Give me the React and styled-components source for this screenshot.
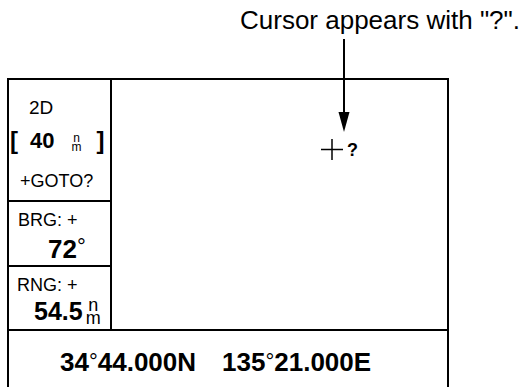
import React from "react";
import styled, { createGlobalStyle } from "styled-components";

const GlobalStyle = createGlobalStyle`
  html, body {
    margin: 0;
    padding: 0;
    background: #ffffff;
  }
  body {
    font-family: "Liberation Sans", Arial, sans-serif;
    color: #000;
  }
`;

const Page = styled.div`
  position: relative;
  width: 525px;
  height: 387px;
  overflow: hidden;
`;

const Caption = styled.div`
  height: 78px;
  padding-left: 240px;
  padding-top: 6px;
  box-sizing: border-box;
  font-size: 26px;
  line-height: 28px;
  white-space: nowrap;
`;

const Pointer = styled.svg`
  position: absolute;
  left: 337px;
  top: 39px;
`;

const Screen = styled.div`
  margin-left: 7px;
  width: 442px;
  height: 330px;
  box-sizing: border-box;
  border: 2px solid #000;
  border-bottom: none;
  display: flex;
  flex-direction: column;
`;

const Upper = styled.div`
  display: grid;
  grid-template-columns: 103px 1fr;
  height: 249px;
  border-bottom: 2px solid #000;
`;

const Side = styled.div`
  border-right: 2px solid #000;
  display: flex;
  flex-direction: column;
`;

const Cell = styled.div`
  height: ${(p) => p.$h}px;
  box-sizing: border-box;
  border-bottom: ${(p) => (p.$last ? "none" : "2px solid #000")};
  display: flex;
  flex-direction: column;
`;

const Label = styled.div`
  font-size: ${(p) => p.$size || 18}px;
  line-height: 18px;
  padding-left: ${(p) => p.$x}px;
  margin-top: ${(p) => p.$y}px;
  white-space: nowrap;
`;

const Big = styled.div`
  font-weight: bold;
  font-size: ${(p) => p.$size}px;
  line-height: ${(p) => p.$size}px;
  padding-left: ${(p) => p.$x}px;
  margin-top: ${(p) => p.$y}px;
  display: flex;
  align-items: flex-end;
  white-space: nowrap;
`;

const Bracket = styled.span`
  font-size: 24px;
  margin-right: ${(p) => p.$after || 0}px;
`;

const Degree = styled.span`
  font-weight: normal;
  align-self: flex-start;
  font-size: ${(p) => p.$size || 22}px;
  line-height: 1;
`;

const Unit = styled.span`
  display: inline-flex;
  flex-direction: column;
  align-items: center;
  font-weight: normal;
  font-size: ${(p) => p.$size}px;
  line-height: ${(p) => p.$lh}px;
  margin: 0 ${(p) => p.$right}px ${(p) => p.$bottom || 0}px ${(p) => p.$left}px;
`;

const Map = styled.div`
  position: relative;
`;

const Cursor = styled.div`
  position: absolute;
  left: 209px;
  top: 59px;
  display: flex;
  align-items: center;
  gap: 4px;
`;

const Ask = styled.span`
  font-weight: bold;
  font-size: 18px;
  line-height: 20px;
`;

const Coords = styled.div`
  padding: 18px 0 0 51px;
  font-weight: bold;
  font-size: 26px;
  line-height: 26px;
  display: flex;
  gap: 26px;
  white-space: nowrap;
`;

const Coord = styled.span`
  display: flex;
`;

const Ring = styled.span`
  font-weight: normal;
  font-size: 22px;
`;

export default function App() {
  return (
    <>
      <GlobalStyle />
      <Page>
        <Caption>Cursor appears with "?".</Caption>
        <Pointer width="16" height="94" viewBox="0 0 16 94">
          <line x1="7" y1="0" x2="7" y2="76" stroke="#000" strokeWidth="2" />
          <polygon points="1.5,73 12.5,73 7,93" fill="#000" />
        </Pointer>
        <Screen>
          <Upper>
            <Side>
              <Cell $h={122}>
                <Label $size={19} $x={20} $y={19}>2D</Label>
                <Big $size={22} $x={1} $y={13}>
                  <Bracket $after={12}>[</Bracket>40
                  <Unit $size={12} $lh={9} $left={17} $right={15}>
                    <span>n</span>
                    <span>m</span>
                  </Unit>
                  <Bracket>]</Bracket>
                </Big>
                <Label $x={11} $y={20}>+GOTO?</Label>
              </Cell>
              <Cell $h={65}>
                <Label $x={9} $y={9}>BRG: +</Label>
                <Big $size={26} $x={39} $y={7}>
                  72<Degree $size={22}>°</Degree>
                </Big>
              </Cell>
              <Cell $h={62} $last>
                <Label $x={8} $y={9}>RNG: +</Label>
                <Big $size={25} $x={25} $y={5}>
                  54.5
                  <Unit $size={18} $lh={13} $left={3} $right={0} $bottom={-1}>
                    <span>n</span>
                    <span>m</span>
                  </Unit>
                </Big>
              </Cell>
            </Side>
            <Map>
              <Cursor>
                <svg width="22" height="21" viewBox="0 0 22 21">
                  <line x1="0" y1="10.5" x2="22" y2="10.5" stroke="#000" strokeWidth="1.5" />
                  <line x1="11" y1="0" x2="11" y2="21" stroke="#000" strokeWidth="1.5" />
                </svg>
                <Ask>?</Ask>
              </Cursor>
            </Map>
          </Upper>
          <Coords>
            <Coord>
              34<Ring>°</Ring>44.000N
            </Coord>
            <Coord>
              135<Ring>°</Ring>21.000E
            </Coord>
          </Coords>
        </Screen>
      </Page>
    </>
  );
}
